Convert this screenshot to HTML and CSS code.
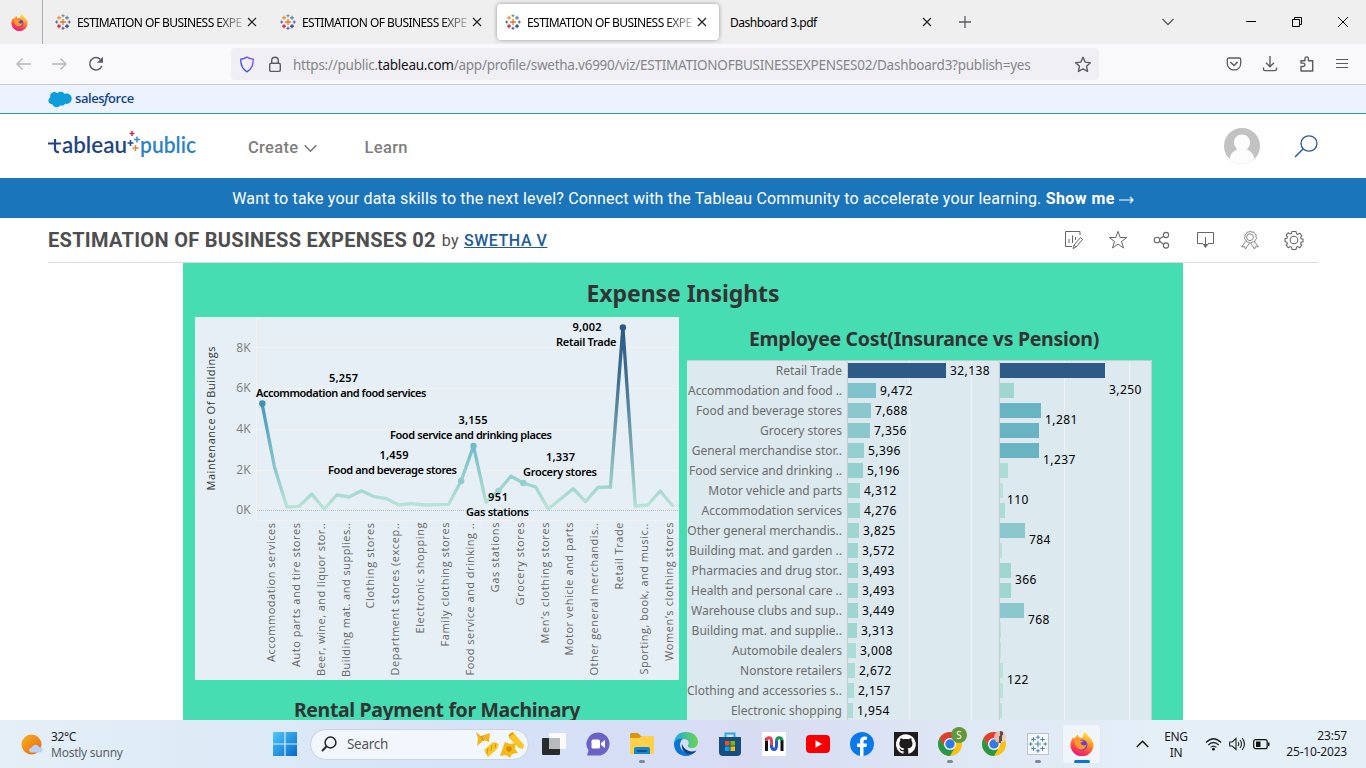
FILE: index.html
```html
<!DOCTYPE html>
<html lang="en">
<head>
<meta charset="utf-8">
<title>ESTIMATION OF BUSINESS EXPENSES 02</title>
<link rel="stylesheet" href="styles.css">
</head>
<body>
<svg class="defs" width="0" height="0">
  <defs>
    <symbol id="tableau" viewBox="0 0 16 16">
      <g fill="none" stroke-width="1.2">
        <path stroke="#e8762c" stroke-width="1.3" d="M8 5v6M5 8h6"/>
        <path stroke="#eb912b" d="M4 1.8v4M2 3.8h4"/>
        <path stroke="#59879b" d="M12 1.8v4M10 3.8h4"/>
        <path stroke="#c72037" d="M4 10.2v4M2 12.2h4"/>
        <path stroke="#1f447e" d="M12 10.2v4M10 12.2h4"/>
        <path stroke="#7099a5" d="M8 .2v3M6.5 1.7h3"/>
        <path stroke="#5b6591" d="M8 12.8v3M6.5 14.3h3M1.7 6.5v3M.2 8h3M14.3 6.5v3M12.8 8h3"/>
      </g>
    </symbol>
    <symbol id="chrome" viewBox="0 0 24 24">
      <circle cx="12" cy="12" r="12" fill="#fbc116"/>
      <path d="M1.6 6A12 12 0 0 1 22.4 6H12L6.8 15z" fill="#e33b2e"/>
      <path d="M1.6 6l5.2 9 4 2-1 6.8A12 12 0 0 1 1.6 6z" fill="#279847"/>
      <path d="M6.800 15L12 18l4-1-4 7-3-.4z" fill="#279847"/>
      <circle cx="12" cy="12" r="6" fill="#fff"/><circle cx="12" cy="12" r="4.700" fill="#2f7be9"/>
    </symbol>
    <linearGradient id="ffg" x1="0.7" y1="0" x2="0.3" y2="1"><stop offset="0" stop-color="#fff04a"/><stop offset=".4" stop-color="#ff9422"/><stop offset=".75" stop-color="#ff3750"/><stop offset="1" stop-color="#e31587"/></linearGradient>
    <symbol id="firefox" viewBox="0 0 24 24">
      <path d="M15 0c2 1.500 3 3 3.500 4.500C21.500 6.500 23.500 10 23.500 13A11.500 11.300 0 0 1 .5 13C.5 9.500 2 7 3.500 5c0 1 .3 1.500.7 2C5.500 5 6.500 3.500 8 2.500c0 1.500.7 2.500 2 3h3C12.500 3.500 13.500 1.500 15 0z" fill="url(#ffg)"/>
      <circle cx="12" cy="13" r="5.400" fill="#6b3fd0"/>
      <path d="M4.500 8c2-1.500 4.500-1 6 .5h3c-.5 1.500-2 2-3 2.300.5 2.700 4 3.700 6 1.700-.5 3.500-3.200 5.500-6 5-4-.7-6-5-6-9.500z" fill="#ff9a2b"/>
    </symbol>
    <symbol id="close" viewBox="0 0 10 10"><path d="M1 1l8 8M9 1l-8 8" fill="none" stroke="#222" stroke-width="1.200"/></symbol>
  </defs>
</svg>

<header class="tabs">
  <div class="pin"><svg width="17" height="17"><use href="#firefox"/></svg></div>
  <div class="tab"><svg width="16" height="16"><use href="#tableau"/></svg><span class="tab-name fade">ESTIMATION OF BUSINESS EXPE</span><svg class="x" width="10" height="10"><use href="#close"/></svg></div>
  <div class="tab"><svg width="16" height="16"><use href="#tableau"/></svg><span class="tab-name fade">ESTIMATION OF BUSINESS EXPE</span><svg class="x" width="10" height="10"><use href="#close"/></svg></div>
  <div class="tab active"><svg width="16" height="16"><use href="#tableau"/></svg><span class="tab-name fade">ESTIMATION OF BUSINESS EXPE</span><svg class="x" width="10" height="10"><use href="#close"/></svg></div>
  <div class="tab pdf"><span class="tab-name">Dashboard 3.pdf</span><svg class="x" width="10" height="10"><use href="#close"/></svg></div>
  <svg class="new" width="12" height="12" viewBox="0 0 12 12"><path d="M6 0v12M0 6h12" stroke="#5b5b66" stroke-width="1.300"/></svg>
  <div class="window">
    <svg width="14" height="10" viewBox="0 0 14 10"><path d="M1.500 2L7 7.500 12.500 2" fill="none" stroke="#5b5b66" stroke-width="1.300"/></svg>
    <svg class="min" width="10" height="10" viewBox="0 0 10 10"><path d="M0 4.500h10" stroke="#000"/></svg>
    <svg class="max" width="10" height="10" viewBox="0 0 10 10"><path d="M.5 2.500h7v7h-7zM2.500 2V.5h7v7H8" fill="none" stroke="#000"/></svg>
    <svg class="cls" width="10" height="10" viewBox="0 0 10 10"><path d="M0 0l10 10M10 0L0 10" stroke="#000"/></svg>
  </div>
</header>

<nav class="toolbar">
  <div class="nav-icons">
    <svg width="15" height="14" viewBox="0 0 15 14"><path d="M15 7H1M6.500 1.500L1 7l5.500 5.500" fill="none" stroke="#b5b5ba" stroke-width="1.300"/></svg>
    <svg width="15" height="14" viewBox="0 0 15 14"><path d="M0 7h14M8.500 1.500L14 7l-5.500 5.500" fill="none" stroke="#b5b5ba" stroke-width="1.300"/></svg>
    <svg width="16" height="16" viewBox="0 0 16 16"><path d="M13.800 10A6.200 6.200 0 1 1 12.500 3.500" fill="none" stroke="#5b5b66" stroke-width="1.500"/><path d="M15 .8v6H9z" fill="#5b5b66"/></svg>
  </div>
  <div class="url">
    <svg width="16" height="17" viewBox="0 0 16 17"><defs><linearGradient id="sh" x1="0" y1="1" x2="1" y2="0"><stop offset="0" stop-color="#2d4fd0"/><stop offset="1" stop-color="#9059ff"/></linearGradient></defs><path d="M8 1.200c2 1.300 4 1.900 6.300 2.100 0 5-1 9.700-6.300 12.500C2.700 13 1.700 8.300 1.700 3.300 4 3.100 6 2.500 8 1.200z" fill="none" stroke="url(#sh)" stroke-width="1.400"/></svg>
    <svg class="lock" width="14" height="17" viewBox="0 0 14 17"><rect x="1.700" y="7.200" width="10.600" height="8.200" rx="1.500" fill="none" stroke="#5b5b66" stroke-width="1.400"/><path d="M3.700 7V4.500a3.300 3.300 0 0 1 6.600 0V7" fill="none" stroke="#5b5b66" stroke-width="1.400"/></svg>
    <span class="address">https://public.<b>tableau.com</b>/app/profile/swetha.v6990/viz/ESTIMATIONOFBUSINESSEXPENSES02/Dashboard3?publish=yes</span>
    <svg class="fav" width="18" height="17" viewBox="0 0 18 17"><path d="M9 1.300l2.200 4.800 5.200.6-3.900 3.500 1.100 5.200L9 12.800l-4.600 2.600 1.100-5.200L1.600 6.700l5.200-.6z" fill="none" stroke="#5b5b66" stroke-width="1.400" stroke-linejoin="round"/></svg>
  </div>
  <div class="tools">
    <svg width="16" height="16" viewBox="0 0 16 16"><path d="M2.700 2h10.600c.8 0 1.400.6 1.400 1.400V7.500c0 4-3 6.400-6.700 6.400S1.300 11.500 1.300 7.500V3.400C1.300 2.600 1.900 2 2.700 2z" fill="none" stroke="#5b5b66" stroke-width="1.300"/><path d="M4.300 6L8 9.500 11.700 6" fill="none" stroke="#5b5b66" stroke-width="1.600"/></svg>
    <svg width="16" height="16" viewBox="0 0 16 16"><path d="M8 0v10.500M4 6.700l4 4 4-4M1.500 11.500v1.500c0 1 .6 1.600 1.600 1.600h9.800c1 0 1.600-.6 1.600-1.600v-1.500" fill="none" stroke="#5b5b66" stroke-width="1.400"/></svg>
    <svg width="16" height="16" viewBox="0 0 16 16"><path d="M2 15V10.500h2.200a1.700 1.700 0 0 0 0-3.400H2V4.700h4V2.600a1.700 1.700 0 0 1 3.400 0v2.100h4.300V15z" fill="none" stroke="#5b5b66" stroke-width="1.400" stroke-linejoin="round"/></svg>
    <svg width="14" height="16" viewBox="0 0 14 16"><path d="M1 3.500h12M1 7.500h12M1 11.500h12" stroke="#5b5b66" stroke-width="1.200"/></svg>
  </div>
</nav>

<div class="salesforce">
  <svg width="24" height="17" viewBox="0 0 24 17"><path d="M2.500 3.500C3.500 1 7 0 9.500 2.200 11.500 0 15.500.3 16.500 3 20 1.500 23.700 4 23.700 7.500c0 3.700-3.200 6-6.500 5.300-1.200 2-3.500 2.300-5 1.500-1.700 3-6.700 2.500-7.500-.8C1.500 13.500 0 11 .5 8.700c.2-1 .8-1.800 1.700-2.500-.2-1-.1-1.900.3-2.700z" fill="#0d9ddb"/></svg>
  <span>sales<i>f</i>orce</span>
</div>

<header class="site">
  <svg class="brand" width="150" height="36" viewBox="0 0 150 36">
    <path d="M7 10v9.500q0 4 4 3.500M0 14.500h13" fill="none" stroke="#1f4584" stroke-width="2.200"/>
    <text x="14" y="24" textLength="65" lengthAdjust="spacingAndGlyphs" class="brand-a">ableau</text>
    <text x="92" y="24" textLength="56" lengthAdjust="spacingAndGlyphs" class="brand-b">public</text>
    <g fill="none" stroke-width="1.500"><path stroke="#c8304f" d="M84 2v5M81.500 4.500h5"/><path stroke="#1f4584" d="M82.500 11v6M79.500 14h6"/><path stroke="#3a8fc9" d="M89 7.500v6M86 10.500h6"/><path stroke="#e98242" d="M87.500 16v6M84.500 19h6"/></g>
  </svg>
  <span class="menu create">Create</span>
  <svg class="chev" width="13" height="9" viewBox="0 0 13 9"><path d="M.7 1.200l5.800 6 5.800-6" fill="none" stroke="#777" stroke-width="1.600"/></svg>
  <span class="menu learn">Learn</span>
  <svg class="avatar" width="36" height="36" viewBox="0 0 36 36"><defs><clipPath id="av"><circle cx="18" cy="18" r="18"/></clipPath></defs><g clip-path="url(#av)"><path d="M0 0h36v36H0z" fill="#c2c2c2"/><path d="M18 6.500c4.500 0 8 3.500 8 8 0 3-1.500 5.500-3.500 7 4 1 7 4.500 8 9.500l-3 7H8l-2.500-7c1-5 4-8.500 8-9.500-2-1.500-3.500-4-3.500-7 0-4.500 3.500-8 8-8z" fill="#fdfdfd"/></g></svg>
  <svg class="find" width="24" height="23" viewBox="0 0 24 23"><ellipse cx="15" cy="8.500" rx="8" ry="7.700" fill="none" stroke="#2758a5" stroke-width="1.300"/><path d="M9 14L1 22" stroke="#2758a5" stroke-width="1.500"/></svg>
</header>

<div class="promo"><span>Want to take your data skills to the next level? Connect with the Tableau Community to accelerate your learning. <b>Show me</b></span><svg width="15" height="10" viewBox="0 0 15 10"><path d="M0 5h14M11 2l3 3-3 3" fill="none" stroke="#fff" stroke-width="1.200"/></svg></div>

<div class="heading">
  <h1>ESTIMATION OF BUSINESS EXPENSES 02</h1><span class="by">by</span><a class="author">SWETHA V</a>
  <div class="actions">
    <svg width="20" height="20" viewBox="0 0 20 20"><path d="M16 5V1.500H1.500v15H8M5 13V9M8.500 13V5.500M11.500 10V7M9 18.500l1-3.500 6.500-7.500 2 2L12 17zM10 15l2 2" fill="none" stroke="#666"/></svg>
    <svg width="20" height="20" viewBox="0 0 20 20"><path d="M10 1.300l2.200 6.200h6.500l-5.200 4 2 6.500-5.500-3.900L4.500 18l2-6.500-5.200-4h6.500z" fill="none" stroke="#666"/></svg>
    <svg width="20" height="20" viewBox="0 0 20 20"><g fill="none" stroke="#666" stroke-width="1.100"><circle cx="5" cy="10" r="2.800"/><circle cx="14" cy="5" r="2.600"/><circle cx="14" cy="15.500" r="2.600"/><path d="M7.500 8.700l4.200-2.500M7.500 11.300l4.200 3"/></g></svg>
    <svg width="20" height="20" viewBox="0 0 20 20"><path d="M7 13.500H1.500V2.500h16v11h-5.500M9.500 7v9.500" fill="none" stroke="#666"/><path d="M6.500 14h6l-3 4z" fill="#666"/></svg>
    <svg width="20" height="20" viewBox="0 0 20 20"><g fill="none" stroke="#777" stroke-width=".9"><path d="M10 1l1.700 1.100 2-.1.800 1.800 1.700 1-.3 2 .8 1.800-1.500 1.300-.6 1.900-2 .3L10 13.200 8.400 12.100l-2-.3-.6-1.900L4.300 8.600l.8-1.800-.3-2 1.700-1 .8-1.800 2 .1z"/><circle cx="10" cy="7.200" r="3.400"/><path d="M5.500 11.500L1.700 17l2.800-.5 1 2.500 3.800-5.800M14.500 11.500l3.800 5.500-2.800-.5-1 2.500-3.800-5.800"/></g></svg>
    <svg width="20" height="20" viewBox="0 0 20 20"><g fill="none" stroke="#666" stroke-width="1.100"><circle cx="10" cy="10" r="3.800"/><path d="M8 1.500h4l.5 2.300 1.300.6 2-1.200 2 2.500-1.200 1.600.5 1.400 1.900.5v2.600l-1.900.5-.5 1.400 1.200 1.600-2 2.400-2-1.200-1.300.6-.5 2.400H8l-.5-2.400-1.300-.6-2 1.200-2-2.400 1.200-1.600-.5-1.400L1 11.300V8.700l1.900-.5.500-1.400-1.200-1.600 2-2.500 2 1.200 1.300-.6z"/></g></svg>
  </div>
</div>

<main class="viz">
  <h2 class="viz-title">Expense Insights</h2>
  <div class="panels">
    <section class="left">
      <svg class="chart" width="484" height="363" viewBox="195 317 484 363">
        <defs>
          <linearGradient id="g0" gradientUnits="userSpaceOnUse" x1="0" y1="403" x2="0" y2="507"><stop offset="0" stop-color="#4198b8"/><stop offset=".62" stop-color="#88c7cd"/><stop offset="1" stop-color="#b9e3d6"/></linearGradient>
          <linearGradient id="g1" gradientUnits="userSpaceOnUse" x1="0" y1="446" x2="0" y2="507"><stop offset="0" stop-color="#70bccb"/><stop offset=".6" stop-color="#9cd3cf"/><stop offset="1" stop-color="#b9e3d6"/></linearGradient>
          <linearGradient id="g2" gradientUnits="userSpaceOnUse" x1="0" y1="327" x2="0" y2="505"><stop offset="0" stop-color="#2c5985"/><stop offset=".3" stop-color="#42708f"/><stop offset="1" stop-color="#acdcd3"/></linearGradient>
        </defs>
        <g stroke="#f3f2f1"><path d="M252 347.500h427M252 388.500h427M252 429.500h427M252 470.500h427M256.500 317v204M256.500 520.500H679"/><path d="M281.500 520v3m25-3v3m25-3v3m25-3v3m25-3v3m25-3v3m25-3v3m25-3v3m24-3v3m25-3v3m25-3v3m25-3v3m25-3v3m25-3v3m25-3v3m25-3v3"/></g>
        <path d="M257 510.500h422" stroke="#b8c1c6" stroke-dasharray="1 1"/>
        <g fill="none" stroke-width="3.300" stroke-linejoin="round" stroke-linecap="round">
          <polyline stroke="url(#g0)" points="262,403.300 274.500,467.300 286.900,507 299.300,506.300 311.800,494 324.200,509"/>
          <polyline stroke="url(#g1)" points="324.200,509 336.700,495 349.100,497 361.500,490.700 374,496.700 386.400,498.700 398.900,505 411.300,503.700 423.800,505 436.200,504.700 448.600,504.300 461.100,481 473.500,446 486,502.300 498.400,491 510.900,476.300 523.300,483 535.700,487 548.200,509 560.600,499 573.100,488.700 585.500,501.700 598,487.300 610.400,487"/>
          <polyline stroke="url(#g2)" points="610.400,487 622.900,327.300 635.300,506"/>
          <polyline stroke="url(#g1)" points="635.300,506 647.700,505 660.200,491 672.600,505.700"/>
        </g>
        <circle cx="262.300" cy="403.500" r="3.200" fill="#3a92b5"/><circle cx="461.100" cy="481" r="3.200" fill="#90cccd"/><circle cx="473.500" cy="446" r="3.200" fill="#70bccb"/><circle cx="498.400" cy="491" r="3.200" fill="#9fd5d0"/><circle cx="523.300" cy="483" r="3.200" fill="#94cfce"/><circle cx="622.900" cy="327.500" r="3.200" fill="#2c5985"/>
        <g class="ticks" text-anchor="end"><text x="250.500" y="352">8K</text><text x="250.500" y="392">6K</text><text x="250.500" y="433">4K</text><text x="250.500" y="474">2K</text><text x="250.500" y="514">0K</text></g>
        <text class="axis-title" transform="translate(215 490.500) rotate(-90)" textLength="144">Maintenance Of Buildings</text>
        <g class="marks">
          <text x="329" y="382" textLength="29">5,257</text><text x="256" y="397" textLength="170.500">Accommodation and food services</text>
          <text x="458.500" y="424" textLength="29">3,155</text><text x="390" y="439" textLength="162">Food service and drinking places</text>
          <text x="379.500" y="459" textLength="29">1,459</text><text x="328" y="474" textLength="129">Food and beverage stores</text>
          <text x="488" y="501" textLength="20">951</text><text x="466" y="516" textLength="63">Gas stations</text>
          <text x="546" y="461" textLength="29">1,337</text><text x="523" y="476" textLength="74">Grocery stores</text>
          <text x="572.500" y="331" textLength="29">9,002</text><text x="556" y="346" textLength="60.500">Retail Trade</text>
        </g>
        <g class="names">
          <text transform="translate(275 662) rotate(-90)" textLength="139">Accommodation services</text>
          <text transform="translate(300 667) rotate(-90)" textLength="144">Auto parts and tire stores</text>
          <text transform="translate(325 676) rotate(-90)" textLength="153">Beer, wine, and liquor stor..</text>
          <text transform="translate(350 677) rotate(-90)" textLength="154">Building mat. and supplies..</text>
          <text transform="translate(374 608.500) rotate(-90)" textLength="85.500">Clothing stores</text>
          <text transform="translate(399 675.500) rotate(-90)" textLength="152.500">Department stores (excep..</text>
          <text transform="translate(424 633.500) rotate(-90)" textLength="111">Electronic shopping</text>
          <text transform="translate(449 646.500) rotate(-90)" textLength="124">Family clothing stores</text>
          <text transform="translate(474 675.500) rotate(-90)" textLength="152.500">Food service and drinking ..</text>
          <text transform="translate(499 592.500) rotate(-90)" textLength="70">Gas stations</text>
          <text transform="translate(524 605.500) rotate(-90)" textLength="83">Grocery stores</text>
          <text transform="translate(549 643.500) rotate(-90)" textLength="121">Men’s clothing stores</text>
          <text transform="translate(573 655.500) rotate(-90)" textLength="133">Motor vehicle and parts</text>
          <text transform="translate(598 675.500) rotate(-90)" textLength="152.500">Other general merchandis..</text>
          <text transform="translate(623 589.500) rotate(-90)" textLength="67">Retail Trade</text>
          <text transform="translate(648 674.500) rotate(-90)" textLength="151">Sporting, book, and music..</text>
          <text transform="translate(673 661) rotate(-90)" textLength="138.500">Women’s clothing stores</text>
        </g>
      </svg>
      <h3 class="rental">Rental Payment for Machinary</h3>
    </section>
    <section class="right">
      <h3 class="employee">Employee Cost(Insurance vs Pension)</h3>
      <div class="table">
        <div class="row"><span class="label">Retail Trade</span><span class="cell"><i class="c9" style="width:98px"></i>32,138</span><span class="cell pen"><i class="c9" style="width:105px"></i><em class="low">3,250</em></span></div>
        <div class="row"><span class="label tight">Accommodation and food ..</span><span class="cell"><i class="c5" style="width:28px"></i>9,472</span><span class="cell pen"><i class="c2" style="width:14px"></i></span></div>
        <div class="row"><span class="label">Food and beverage stores</span><span class="cell"><i class="c4" style="width:23px"></i>7,688</span><span class="cell pen"><i class="c6" style="width:41px"></i><em>1,281</em></span></div>
        <div class="row"><span class="label">Grocery stores</span><span class="cell"><i class="c4" style="width:22px"></i>7,356</span><span class="cell pen"><i class="c6" style="width:39px"></i></span></div>
        <div class="row"><span class="label">General merchandise stor..</span><span class="cell"><i class="c3" style="width:16px"></i>5,396</span><span class="cell pen"><i class="c6" style="width:39px"></i><em>1,237</em></span></div>
        <div class="row"><span class="label tight">Food service and drinking ..</span><span class="cell"><i class="c3" style="width:15px"></i>5,196</span><span class="cell pen"><i class="c1" style="width:8px"></i></span></div>
        <div class="row"><span class="label">Motor vehicle and parts</span><span class="cell"><i class="c2" style="width:12px"></i>4,312</span><span class="cell pen"><i class="c0" style="width:3px"></i><em>110</em></span></div>
        <div class="row"><span class="label">Accommodation services</span><span class="cell"><i class="c2" style="width:12px"></i>4,276</span><span class="cell pen"><i class="c1" style="width:5px"></i></span></div>
        <div class="row"><span class="label">Other general merchandis..</span><span class="cell"><i class="c2" style="width:11px"></i>3,825</span><span class="cell pen"><i class="c4" style="width:25px"></i><em>784</em></span></div>
        <div class="row"><span class="label">Building mat. and garden ..</span><span class="cell"><i class="c2" style="width:10px"></i>3,572</span><span class="cell pen"><i class="c0" style="width:2px"></i></span></div>
        <div class="row"><span class="label">Pharmacies and drug stor..</span><span class="cell"><i class="c2" style="width:10px"></i>3,493</span><span class="cell pen"><i class="c2" style="width:11px"></i><em>366</em></span></div>
        <div class="row"><span class="label">Health and personal care ..</span><span class="cell"><i class="c2" style="width:10px"></i>3,493</span><span class="cell pen"><i class="c2" style="width:11px"></i></span></div>
        <div class="row"><span class="label">Warehouse clubs and sup..</span><span class="cell"><i class="c2" style="width:10px"></i>3,449</span><span class="cell pen"><i class="c4" style="width:24px"></i><em>768</em></span></div>
        <div class="row"><span class="label">Building mat. and supplie..</span><span class="cell"><i class="c2" style="width:9px"></i>3,313</span><span class="cell pen"><i class="c0" style="width:1px"></i></span></div>
        <div class="row"><span class="label">Automobile dealers</span><span class="cell"><i class="c1" style="width:8px"></i>3,008</span><span class="cell pen"><i class="c0" style="width:1px"></i></span></div>
        <div class="row"><span class="label">Nonstore retailers</span><span class="cell"><i class="c1" style="width:7px"></i>2,672</span><span class="cell pen"><i class="c0" style="width:3px"></i><em>122</em></span></div>
        <div class="row"><span class="label">Clothing and accessories s..</span><span class="cell"><i class="c1" style="width:6px"></i>2,157</span><span class="cell pen"><i class="c0" style="width:3px"></i></span></div>
        <div class="row"><span class="label">Electronic shopping</span><span class="cell"><i class="c1" style="width:5px"></i>1,954</span><span class="cell pen"><i class="c0" style="width:2px"></i></span></div>
      </div>
    </section>
  </div>
</main>

<footer class="taskbar">
  <div class="weather">
    <svg width="23" height="22" viewBox="0 0 23 22"><defs><linearGradient id="sun" x1="0" y1="0" x2="1" y2="1"><stop offset="0" stop-color="#f5b322"/><stop offset="1" stop-color="#ee6210"/></linearGradient></defs><circle cx="10.500" cy="10.500" r="10" fill="url(#sun)"/><path d="M11 18.500c-4 0-3.500-5 0-5 .8-3.500 6-3.500 6.800-.5 5 0 5 5.500 1 5.500z" fill="#b9d2f7"/></svg>
    <div><div class="temp">32°C</div><div class="sky">Mostly sunny</div></div>
  </div>
  <svg class="start" width="24" height="24" viewBox="0 0 24 24"><defs><linearGradient id="w" x1="0" y1="0" x2="1" y2="1"><stop offset="0" stop-color="#4fc9fa"/><stop offset="1" stop-color="#0669c9"/></linearGradient></defs><path d="M0 0h11.400v11.400H0zM12.600 0H24v11.400H12.600zM0 12.600h11.400V24H0zM12.600 12.600H24V24H12.600z" fill="url(#w)"/></svg>
  <div class="search">
    <svg width="16" height="16" viewBox="0 0 16 16"><circle cx="9.500" cy="6.500" r="5.400" fill="none" stroke="#222" stroke-width="1.500"/><path d="M5.500 10.500L1 15" stroke="#222" stroke-width="1.800"/></svg>
    <span>Search</span>
    <svg class="pasta" width="50" height="27" viewBox="0 0 50 27"><path d="M1 1l5 4 9-3-1 9-5-2-7 6 1-7z" fill="#f3b51e"/><path d="M6 5l3 5" stroke="#d38709"/><path d="M9 19l9-8 6 2-2 5-9 8-2-3z" fill="#fac928"/><path d="M13 17l-1 6M17 14l-1 6M21 12l-1 5" stroke="#d69107"/><path d="M30 11l5 2 6-1-1 6 3 4-6 1-2 4-4-3-6 1 2-6z" fill="#f5b918"/><circle cx="34" cy="18" r="2.800" fill="#d98e08"/><path d="M34 3l4-2 11 13-1 4-4-1L34 7z" fill="#f9c624"/><path d="M34 5l4-3" stroke="#e09a0e" stroke-width="2"/></svg>
  </div>
  <div class="apps">
    <div class="app"><svg width="24" height="24" viewBox="0 0 24 24"><rect x="7" y="1" width="17" height="16" rx="1" fill="#fafafa"/><rect y="6" width="18" height="17" rx="1" fill="#292c2d"/><path d="M7 6h11v11H7z" fill="#b8bbbd"/></svg></div>
    <div class="app"><svg width="24" height="24" viewBox="0 0 24 24"><path d="M12 .5A11.500 11.500 0 0 1 12 23.500H1l1.500-5A11.500 11.500 0 0 1 12 .5z" fill="#6a63c5"/><rect x="5.500" y="7.500" width="8.500" height="9" rx="1.500" fill="#fff"/><path d="M15 11l4-3v8l-4-3z" fill="#fff"/></svg></div>
    <div class="app run"><svg width="26" height="24" viewBox="0 0 26 24"><path d="M1 3c0-1.500.7-2 2-2h6l3 3h11c1 0 2 .8 2 2v16H1z" fill="#d99613"/><path d="M1 6h9l3-2h12v18H1z" fill="#ffd149"/><path d="M5 22v-5c0-1 .6-2 2-2h12c1.300 0 2 1 2 2v5z" fill="#1685cf"/><path d="M8 18h10v2H8z" fill="#075690"/></svg></div>
    <div class="app"><svg width="24" height="24" viewBox="0 0 24 24"><defs><linearGradient id="e1" x1="0" y1="0" x2="1" y2="0"><stop offset="0" stop-color="#20a9dc"/><stop offset="1" stop-color="#69d850"/></linearGradient></defs><path d="M0 11C1 3 6 0 12 0c7 0 12 4 12 10 0 4-3 6-6 6-4 0-5-2-3.500-4 1-2-1-5-5-5-4 0-8 2-9.500 4z" fill="url(#e1)"/><path d="M0 12c0-3 4-6 9-5-4 2-5 12 5 14 3 .7 6-.5 8.500-2.500C20 22 16 24 12 24 5 24 0 19 0 12z" fill="#0875d5"/><path d="M8 12c-1 5 2 9 7 10 3 0 6-1 7.500-3.500-6 2.500-12 0-14.500-6.500z" fill="#123f7d"/></svg></div>
    <div class="app"><svg width="24" height="24" viewBox="0 0 24 24"><path d="M7.500 6V1.500h9V6" fill="none" stroke="#2da8e6" stroke-width="2"/><path d="M1 5h22v15a4 4 0 0 1-4 4H5a4 4 0 0 1-4-4z" fill="#164d82"/><path d="M7 9h4.500v4.500H7z" fill="#f25022"/><path d="M12.500 9H17v4.500h-4.500z" fill="#7fba00"/><path d="M7 14.500h4.500V19H7z" fill="#00a4ef"/><path d="M12.500 14.500H17V19h-4.500z" fill="#ffb900"/></svg></div>
    <div class="app"><svg width="24" height="24" viewBox="0 0 24 24"><path d="M0 0h24v24H0z" fill="#fff"/><g fill="none" stroke-width="3"><path d="M4.500 19V6" stroke="#111"/><path d="M4.500 9c0-4.500 5-4.500 5 0v7" stroke="#e34259"/><path d="M9.500 13c0 6 5 6 5 0V9" stroke="#2857cf"/><path d="M14.500 9c0-4.500 5.500-4.500 5.500 0" stroke="#15945f"/><path d="M20 8.500V19" stroke="#111"/></g></svg></div>
    <div class="app"><svg width="24" height="18" viewBox="0 0 24 18"><rect width="24" height="18" rx="4" fill="#f60002"/><path d="M9.500 5.200v7.600L16 9z" fill="#fff"/></svg></div>
    <div class="app"><svg width="24" height="24" viewBox="0 0 24 24"><circle cx="12" cy="12" r="12" fill="#0879ed"/><path d="M10 24v-9H7v-3.500h3V9c0-3 2-4.500 4.500-4.500l2.500.2v3h-1.500c-1.500 0-2 .8-2 1.800v2H17l-.6 3.500h-2.900v9z" fill="#fff"/></svg></div>
    <div class="app"><svg width="24" height="24" viewBox="0 0 24 24"><path d="M0 0h24v24H0z" fill="#201c1e"/><path d="M12 2.200A10 10 0 0 0 8.800 21.700c.6.100.7-.3.700-.6v-2c-3 .6-3.500-1.300-3.500-1.300-.5-1.200-1.100-1.500-1.100-1.500 1.200-.5 1.900.8 2.300 1.200.8.9 2 .6 2.500.3 0-.6.300-1.100.6-1.300-3.500-.4-5-2-5-5 0-1 .4-2 1-2.700-.2-.8-.2-1.700.2-2.600 1 0 2 .5 2.800 1 1.700-.4 3.500-.4 5.200 0 .8-.5 1.800-1 2.800-1 .4.900.4 1.800.2 2.600.6.700 1 1.700 1 2.700 0 3-1.500 4.600-5 5 .5.400.8 1 .8 2v2.600c0 .3.100.7.700.6A10 10 0 0 0 12 2.200z" fill="#fff"/></svg></div>
    <div class="app run badged"><svg width="24" height="24"><use href="#chrome"/></svg><span class="badge green">S</span></div>
    <div class="app badged"><svg width="24" height="24"><use href="#chrome"/></svg><span class="badge person"></span></div>
    <div class="app run"><svg class="tbl" width="22" height="22" viewBox="0 0 22 22"><path d="M0 0h22v22H0z" fill="#f5f7f8"/><path d="M11 7.500v7M7.500 11h7M6 3.500v5M3.500 6h5M16 3.500v5M13.500 6h5M6 13.500v5M3.500 16h5M16 13.500v5M13.500 16h5M11 1.500v4M9 3.500h4M11 16.500v4M9 18.500h4M3 9v4M1 11h4M19 9v4M17 11h4" stroke="#3c78a2" stroke-width="1" fill="none"/></svg></div>
    <div class="app current"><svg width="24" height="24"><use href="#firefox"/></svg></div>
  </div>
  <svg class="up" width="13" height="8" viewBox="0 0 13 8"><path d="M.8 7L6.500 1.300 12.200 7" fill="none" stroke="#111" stroke-width="1.400"/></svg>
  <div class="lang">ENG<br>IN</div>
  <div class="status">
    <svg width="17" height="14" viewBox="0 0 17 14"><path d="M1 5.500Q8.500-2 16 5.500M3.300 8q5.200-5 10.400 0M5.600 10.400q2.900-2.700 5.800 0" fill="none" stroke="#222" stroke-width="1.200"/><circle cx="8.500" cy="12.200" r="1.400" fill="#111"/></svg>
    <svg width="17" height="14" viewBox="0 0 17 14"><path d="M.7 5h2.500L7 1.500v11L3.200 9H.7zM9 5q1.500 2 0 4M11 3q3 4 0 8M13.200 1.200q4.500 5.800 0 11.600" fill="none" stroke="#222" stroke-width="1.100"/></svg>
    <svg width="17" height="12" viewBox="0 0 17 12"><rect x=".7" y="1.700" width="13.500" height="9" rx="2" fill="none" stroke="#111" stroke-width="1.200"/><path d="M3 3.500h4.500v5.500H3zM15 4.500h1.500v3.500H15z" fill="#111"/></svg>
  </div>
  <div class="clock">23:57<br>25-10-2023</div>
</footer>
</body>
</html>
```
FILE: styles.css
```css
* { box-sizing: border-box; }
body { margin: 0; width: 1366px; height: 768px; overflow: hidden; display: flex; flex-direction: column; background: #fff; font-family: "Open Sans", sans-serif; }
svg { display: block; flex: none; }
.defs { position: absolute; }

.tabs { height: 44px; flex: none; display: flex; align-items: center; background: #efefef; }
.pin { width: 43px; height: 44px; border-right: 1px solid #b0b0b4; padding: 14px 0 0 11px; }
.tab { width: 222px; height: 36px; margin-right: 3px; display: flex; align-items: center; padding: 0 12px 0 8px; border-radius: 4px; }
.pin + .tab { margin-left: 4px; }
.tab.active { background: #fff; box-shadow: 0 0 4px rgba(0, 0, 0, .38); }
.tab-name { font: 12px/18px "Noto Sans", sans-serif; letter-spacing: -.56px; color: #000; margin: 2px 0 0 6px; flex: 1; white-space: nowrap; }
.fade { -webkit-mask-image: linear-gradient(90deg, #000 83%, rgba(0, 0, 0, .2)); mask-image: linear-gradient(90deg, #000 83%, rgba(0, 0, 0, .2)); }
.x { margin-left: 4px; }
.pdf .tab-name { margin-left: 0; letter-spacing: -.5px; }
.new { margin-left: 12px; }
.window { margin-left: auto; display: flex; align-items: center; padding-right: 18px; }
.min { margin-left: 71px; }
.max { margin-left: 36px; }
.cls { margin-left: 36px; }

.toolbar { height: 41px; flex: none; display: flex; align-items: center; background: #f9f9fb; border-bottom: 1px solid #c9c9cd; }
.nav-icons { width: 231px; display: flex; align-items: center; gap: 21px; padding-left: 16px; }
.url { width: 868px; height: 32px; border-radius: 4px; background: #f0f0f4; display: flex; align-items: center; padding: 0 7px 0 8px; }
.lock { margin-left: 13px; }
.address { margin: 2px 0 0 11px; font: 13.500px/20px "Noto Sans", sans-serif; letter-spacing: -.25px; color: #85858b; white-space: nowrap; }
.address b { font-weight: 400; color: #15141a; }
.fav { margin-left: auto; }
.tools { margin-left: auto; display: flex; align-items: center; gap: 20px; padding-right: 17px; }
.tools svg:nth-child(-n+2) { transform: translateX(-1px); }

.salesforce { height: 29px; flex: none; display: flex; align-items: center; gap: 3px; padding-left: 48px; background: #ecf3fe; border-bottom: 1px solid #1a98cb; color: #13468b; font: 600 13px/18px "Open Sans", sans-serif; letter-spacing: -.45px; }
.salesforce span { margin-top: -3px; }

.site { height: 64px; flex: none; display: flex; align-items: center; padding: 0 48px; color: #7e7e7e; font: 500 16px/20px Roboto, sans-serif; }
.brand { margin-top: 2px; overflow: visible; }
.brand-a, .brand-b { font: 600 22px Lato, sans-serif; }
.brand-a { fill: #1f4584; }
.brand-b { fill: #2a82c5; }
.create { margin-left: 50px; }
.chev { margin: 5px 0 0 5px; }
.menu { margin-top: 3px; font-size: 16.500px; letter-spacing: .33px; }
.learn { margin-left: 48px; }
.avatar { margin-left: auto; }
.find { margin-left: 34px; }

.promo { height: 40px; flex: none; display: flex; align-items: center; justify-content: center; gap: 4px; background: #1b75bb; color: #fff; font: 16px/20px Roboto, sans-serif; letter-spacing: .187px; }
.promo span { padding-top: 1px; }
.promo svg { margin-top: 3px; }
.promo b { font-weight: 700; letter-spacing: .45px; }

.heading { height: 45px; flex: none; margin: 0 48px; border-bottom: 1px solid #dadada; display: flex; align-items: center; font-family: Roboto, sans-serif; color: #4e4e4e; }
h1 { margin: -1px 0 0; font: 700 20px/24px Roboto, sans-serif; letter-spacing: .3px; }
.by { font-size: 16px; margin-left: 6px; padding-top: 1px; letter-spacing: .3px; }
.author { font-size: 16px; font-weight: 500; margin-left: 5px; padding-top: 1px; letter-spacing: .55px; color: #205c94; text-decoration: underline; }
.actions { margin-left: auto; display: flex; gap: 24px; padding-right: 14px; }

.viz { width: 1000px; height: 457px; flex: none; overflow: hidden; margin: 0 auto; background: #46ddb3; color: #333; }
.viz-title { margin: 0; height: 54px; padding-top: 13px; text-align: center; font: 700 23px/34px "Noto Sans", sans-serif; letter-spacing: -.07px; }
.panels { display: flex; gap: 8px; padding-left: 12px; }
.left { width: 484px; }
.chart { background: #e6eff5; }
h3 { margin: 0; text-align: center; font: 700 19.500px/26px "Noto Sans", sans-serif; letter-spacing: -.3px; white-space: nowrap; }
.rental { margin-top: 17px; line-height: 23px; padding-top: 1px; letter-spacing: -.36px; }
.employee { height: 43px; padding: 9px 0 0 9px; }
.right { width: 465px; }
.ticks { font: 12px "Open Sans", sans-serif; fill: #7b7b7b; }
.axis-title { font: 11px "Open Sans", sans-serif; fill: #333; }
.marks { font: 600 11px "Noto Sans", sans-serif; fill: #000; }
.names { font: 11px "Open Sans", sans-serif; fill: #666; }

.table { border-top: 1px solid #c7ccce; border-right: 1px solid #c7ccce; background: #dce9ef; font: 12px/20px "Noto Sans", sans-serif; }
.row { display: grid; grid-template-columns: 160px 152px 152px; height: 20px; white-space: nowrap; }
.label { text-align: right; padding-right: 5px; color: #6c6c6c; }
.tight { letter-spacing: -.07px; }
.cell { display: flex; border-left: 1px solid #c7ccce; color: #000; letter-spacing: .4px; background: linear-gradient(#f0f2f3, #f0f2f3) 61px 0 / 1px 100% no-repeat, linear-gradient(#f0f2f3, #f0f2f3) 123px 0 / 1px 100% no-repeat; }
.pen { background-position: 64px 0, 129px 0; }
.cell i { height: 15px; margin: 2px 4px 0 0; flex: none; }
.cell em { font-style: normal; position: relative; top: 9px; }
.cell .low { top: 19px; }
.c0 { background: #b7e4d7; }
.c1 { background: #abdcd5; }
.c2 { background: #9fd6d2; }
.c3 { background: #95d0d0; }
.c4 { background: #8ac8ce; }
.c5 { background: #80c3cc; }
.c6 { background: #68b4c3; }
.c9 { background: #2d5a87; }

.taskbar { height: 48px; flex: none; display: flex; align-items: center; position: relative; background: linear-gradient(90deg, #e4eff7, #dce9f7 20%, #d5e1f8 38%, #d8dcf3 55%, #dfe8f5 72%, #e4eff8 85%); font: 12px/16px "Noto Sans", sans-serif; color: #1b1b1b; }
.weather { width: 273px; display: flex; gap: 7px; align-items: center; padding: 1px 0 0 21px; }
.temp { letter-spacing: -.35px; }
.sky { color: #5b6167; letter-spacing: -.25px; }
.search { width: 219px; height: 31px; margin: 0 3px 0 13px; border-radius: 16px; background: #f2f6fd; border: 1px solid #ccd3e0; display: flex; align-items: center; padding: 0 3px 0 10px; font-size: 13.500px; color: #555; }
.search span { margin-left: 10px; letter-spacing: -.3px; }
.pasta { margin-left: auto; }
.apps { display: flex; }
.app { width: 44px; height: 40px; display: flex; align-items: center; justify-content: center; position: relative; }
.run::after { content: ""; position: absolute; left: 19px; bottom: 1px; width: 6px; height: 3px; border-radius: 2px; background: #828791; }
.current { width: 39px; margin-left: 2px; background: #f0f5fc; border-radius: 4px; border: 1px solid #e1e9f3; }
.current::after { content: ""; position: absolute; left: 11px; bottom: 0; width: 16px; height: 3px; border-radius: 2px; background: #0a73d3; }
.badge { position: absolute; right: 5px; top: 3px; width: 16px; height: 16px; border-radius: 50%; color: #fff; font-size: 10px; text-align: center; }
.green { background: #63983a; }
.person { width: 12px; height: 12px; top: 7px; right: 10px; background: linear-gradient(100deg, #efb8a9 45%, #5b4b4c 46% 65%, #f2cabb 66%); }
.tbl { border: 1px solid #b9c4cc; }
.up { margin-left: 35px; }
.lang { width: 28px; margin-left: 13px; padding-top: 1px; text-align: center; letter-spacing: -.4px; }
.status { display: flex; align-items: center; gap: 7px; margin-left: 15px; }
.clock { margin-left: auto; padding: 0 19px 0 0; text-align: right; letter-spacing: -.2px; }
```
